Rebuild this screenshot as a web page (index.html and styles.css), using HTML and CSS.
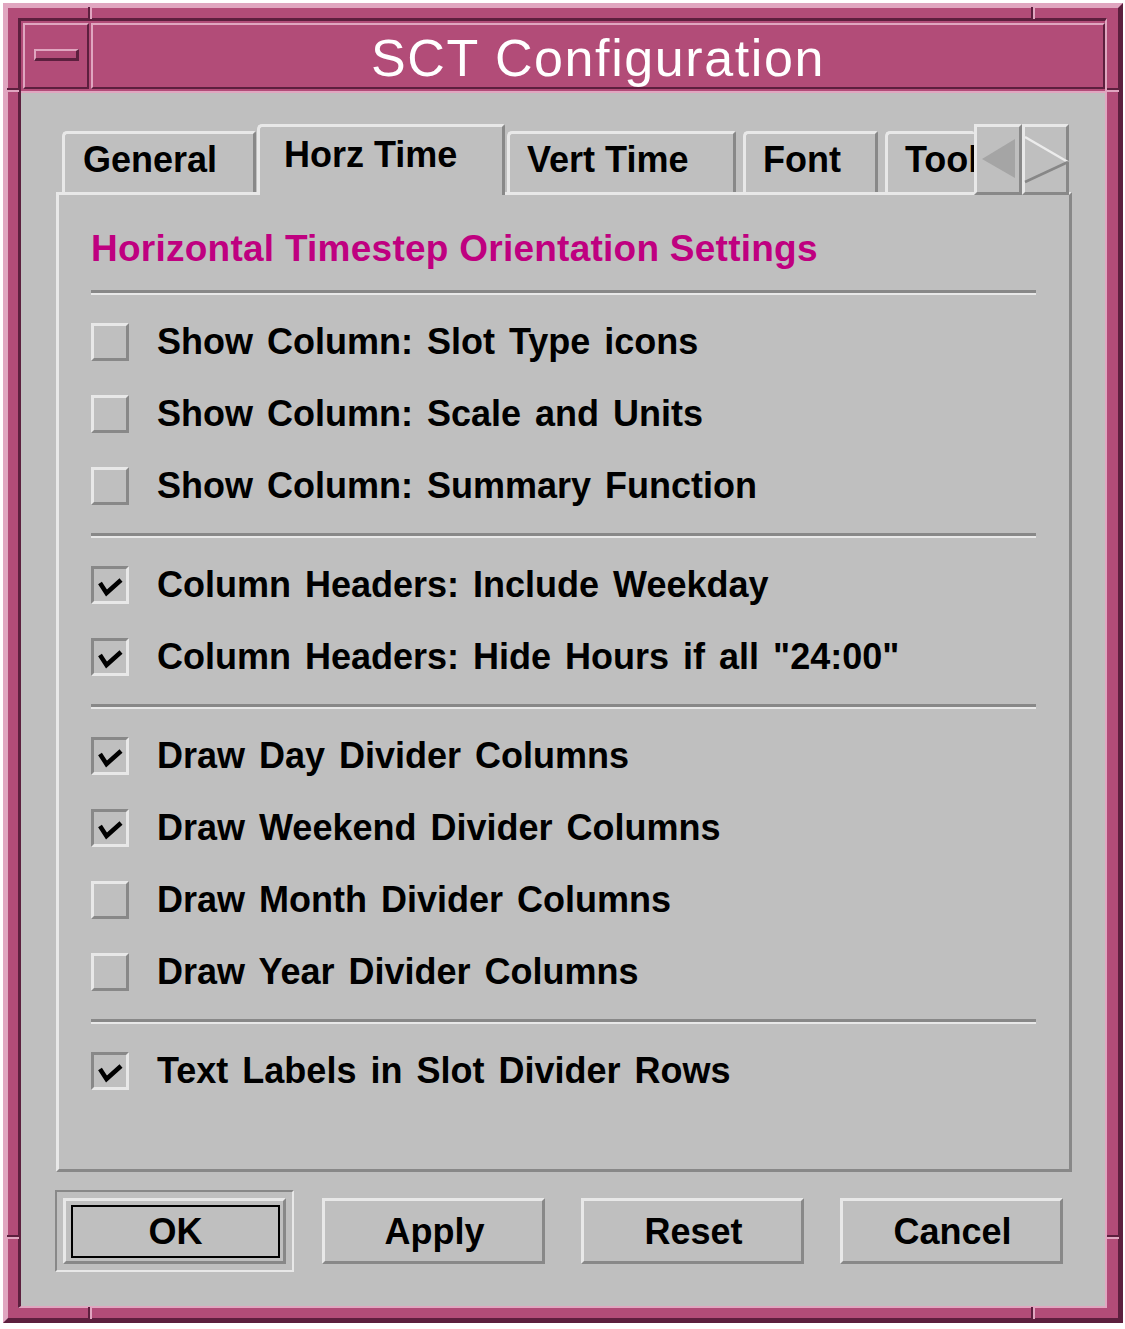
FILE: index.html
```html
<!DOCTYPE html>
<html lang="en">
<head>
    <meta charset="UTF-8">
    <title>SCT Configuration</title>
    <link rel="stylesheet" href="styles.css">
</head>
<body>
    <div class="window">
        <!-- resize handle separators on the frame -->
        <span class="tick tick-v tick-top-l"></span>
        <span class="tick tick-v tick-top-r"></span>
        <span class="tick tick-v tick-bottom-l"></span>
        <span class="tick tick-v tick-bottom-r"></span>
        <span class="tick tick-h tick-left-t"></span>
        <span class="tick tick-h tick-left-b"></span>
        <span class="tick tick-h tick-right-t"></span>
        <span class="tick tick-h tick-right-b"></span>

        <div class="frame-inner">
            <div class="titlebar">
                <div class="menu-btn"><span class="menu-bar"></span></div>
                <div class="caption">SCT Configuration</div>
            </div>

            <div class="client">
                <div class="tabs">
                    <div class="tab tab-general">General</div>
                    <div class="tab tab-active">Horz Time</div>
                    <div class="tab tab-vert">Vert Time</div>
                    <div class="tab tab-font">Font</div>
                    <div class="tab tab-tools">Tools</div>
                    <div class="tab-arrow arrow-left">
                        <svg width="42" height="65" viewBox="0 0 42 65">
                            <polygon points="5,32 38,12 38,51" fill="#a5a5a5"/>
                        </svg>
                    </div>
                    <div class="tab-arrow arrow-right">
                        <svg width="41" height="65" viewBox="0 0 41 65">
                            <line x1="0" y1="10" x2="43" y2="35" stroke="#ececec" stroke-width="2.5"/>
                            <line x1="43" y1="35" x2="0" y2="55" stroke="#878787" stroke-width="2.5"/>
                        </svg>
                    </div>
                </div>

                <div class="panel">
                    <h2 class="panel-title">Horizontal Timestep Orientation Settings</h2>
                    <div class="sep"></div>

                    <div class="option"><span class="check"></span>Show Column: Slot Type icons</div>
                    <div class="option"><span class="check"></span>Show Column: Scale and Units</div>
                    <div class="option"><span class="check"></span>Show Column: Summary Function</div>
                    <div class="sep"></div>

                    <div class="option"><span class="check checked"><svg width="32" height="32" viewBox="0 0 32 32"><polyline points="6,14 12.5,24 27,11" fill="none" stroke="#000" stroke-width="4.5"/></svg></span>Column Headers: Include Weekday</div>
                    <div class="option"><span class="check checked"><svg width="32" height="32" viewBox="0 0 32 32"><polyline points="6,14 12.5,24 27,11" fill="none" stroke="#000" stroke-width="4.5"/></svg></span>Column Headers: Hide Hours if all "24:00"</div>
                    <div class="sep"></div>

                    <div class="option"><span class="check checked"><svg width="32" height="32" viewBox="0 0 32 32"><polyline points="6,14 12.5,24 27,11" fill="none" stroke="#000" stroke-width="4.5"/></svg></span>Draw Day Divider Columns</div>
                    <div class="option"><span class="check checked"><svg width="32" height="32" viewBox="0 0 32 32"><polyline points="6,14 12.5,24 27,11" fill="none" stroke="#000" stroke-width="4.5"/></svg></span>Draw Weekend Divider Columns</div>
                    <div class="option"><span class="check"></span>Draw Month Divider Columns</div>
                    <div class="option"><span class="check"></span>Draw Year Divider Columns</div>
                    <div class="sep"></div>

                    <div class="option"><span class="check checked"><svg width="32" height="32" viewBox="0 0 32 32"><polyline points="6,14 12.5,24 27,11" fill="none" stroke="#000" stroke-width="4.5"/></svg></span>Text Labels in Slot Divider Rows</div>
                </div>

                <div class="buttons">
                    <div class="default-ring">
                        <div class="btn"><span class="btn-label focused">OK</span></div>
                    </div>
                    <div class="btn"><span class="btn-label">Apply</span></div>
                    <div class="btn"><span class="btn-label">Reset</span></div>
                    <div class="btn"><span class="btn-label">Cancel</span></div>
                </div>
            </div>
        </div>
    </div>
</body>
</html>
```

FILE: styles.css
```css
* {
    box-sizing: border-box;
}

body {
    margin: 0;
    padding: 3px;
    background: #fff;
    font-family: "Liberation Sans", Arial, sans-serif;
}

/* Ventana estilo Motif */
.window {
    position: relative;
    width: 1120px;
    height: 1320px;
    background: #b24c78;
    border: 5px solid;
    border-color: #e0a6c0 #5c1f3e #5c1f3e #e0a6c0;
    padding: 10px 11px 10px 10px;
}

.frame-inner {
    height: 100%;
    display: flex;
    flex-direction: column;
    border-style: solid;
    border-width: 3px 2px 2px 3px;
    border-color: #5c1f3e #e0a6c0 #e0a6c0 #5c1f3e;
}

.tick {
    position: absolute;
    border-style: solid;
    border-width: 0;
}

.tick-v {
    width: 4px;
    height: 12px;
    border-left: 2px solid #5c1f3e;
    border-right: 2px solid #e0a6c0;
}

.tick-h {
    width: 12px;
    height: 4px;
    border-top: 2px solid #5c1f3e;
    border-bottom: 2px solid #e0a6c0;
}

.tick-top-l { left: 80px; top: -1px; }
.tick-top-r { left: 1023px; top: -1px; }
.tick-bottom-l { left: 80px; top: 1299px; }
.tick-bottom-r { left: 1023px; top: 1299px; }
.tick-left-t { left: -1px; top: 80px; }
.tick-left-b { left: -1px; top: 1227px; }
.tick-right-t { left: 1099px; top: 80px; }
.tick-right-b { left: 1099px; top: 1227px; }

.titlebar {
    height: 70px;
    display: flex;
    padding: 2px 0 2px 2px;
}

.menu-btn {
    width: 66px;
    height: 66px;
    margin-right: 2px;
    border-style: solid;
    border-width: 2px;
    border-color: #e0a6c0 #5c1f3e #5c1f3e #e0a6c0;
    display: flex;
    align-items: center;
    justify-content: center;
}

.menu-bar {
    width: 45px;
    height: 12px;
    margin-bottom: 2px;
    border-style: solid;
    border-width: 2px 3px 3px 2px;
    border-color: #e0a6c0 #5c1f3e #5c1f3e #e0a6c0;
}

.caption {
    flex: 1;
    height: 66px;
    border-style: solid;
    border-width: 2px;
    border-color: #e0a6c0 #5c1f3e #5c1f3e #e0a6c0;
    padding-top: 6px;
    text-align: center;
    color: #fff;
    font-size: 52px;
    line-height: 54px;
    letter-spacing: 1.6px;
}

/* Área gris */
.client {
    flex: 1;
    background: #bfbfbf;
    border-top: 2px solid #e0a6c0;
    padding: 31px 33px 42px 35px;
}

.tabs {
    display: flex;
    align-items: flex-end;
    margin-left: 6px;
    height: 68px;
}

.tab {
    height: 61px;
    border-style: solid;
    border-width: 3px 3px 0 3px;
    border-color: #e8e8e8 #888 #888 #e8e8e8;
    border-top-left-radius: 5px;
    border-top-right-radius: 2px;
    padding: 6px 0 0 18px;
    font-size: 36px;
    font-weight: bold;
    line-height: 40px;
    white-space: nowrap;
    color: #000;
}

.tab-general { width: 194px; }

.tab-active {
    position: relative;
    z-index: 1;
    width: 248px;
    height: 71px;
    margin-left: 1px;
    margin-bottom: -3px;
    padding-top: 8px;
    padding-left: 24px;
    background: #bfbfbf;
}

.tab-vert { width: 229px; margin-left: 2px; padding-left: 17px; }
.tab-font { width: 135px; margin-left: 7px; padding-left: 17px; }

.tab-tools {
    width: 89px;
    margin-left: 7px;
    padding-left: 17px;
    border-right-width: 0;
    overflow: hidden;
}

.tab-arrow {
    position: relative;
    z-index: 1;
    height: 71px;
    margin-bottom: -3px;
    background: #bfbfbf;
    border-style: solid;
    border-width: 3px;
    border-color: #e8e8e8 #888 #888 #e8e8e8;
}

.tab-arrow svg {
    display: block;
    overflow: visible;
}

.arrow-left { width: 48px; }
.arrow-right { width: 47px; }

.panel {
    height: 980px;
    border-style: solid;
    border-width: 3px;
    border-color: #e8e8e8 #888 #888 #e8e8e8;
    padding: 32px 33px 0 32px;
}

.panel-title {
    margin: 0 0 19px;
    color: #bf0080;
    font-size: 37px;
    font-weight: bold;
    line-height: 44px;
    letter-spacing: 0.25px;
}

.sep {
    height: 5px;
    margin: 11px 0;
    border-top: 3px solid #888;
    border-bottom: 2px solid #e8e8e8;
}

.option {
    height: 72px;
    display: flex;
    align-items: center;
    font-size: 36px;
    font-weight: bold;
    line-height: 72px;
    color: #000;
    white-space: nowrap;
    word-spacing: 4px;
}

.check {
    width: 38px;
    height: 38px;
    flex: none;
    margin-right: 28px;
    border-style: solid;
    border-width: 3px;
    border-color: #e8e8e8 #888 #888 #e8e8e8;
}

.check.checked {
    border-color: #888 #e8e8e8 #e8e8e8 #888;
}

.check svg {
    display: block;
}

/* Botones */
.buttons {
    display: flex;
    align-items: flex-start;
    gap: 36px;
    margin: 26px 0 0 7px;
}

.default-ring {
    margin: -8px;
    padding: 6px;
    border-style: solid;
    border-width: 2px;
    border-color: #888 #e8e8e8 #e8e8e8 #888;
}

.btn {
    width: 223px;
    height: 66px;
    padding: 4px 3px 3px 5px;
    border-style: solid;
    border-width: 3px;
    border-color: #e8e8e8 #888 #888 #e8e8e8;
}

.btn-label {
    display: flex;
    height: 100%;
    align-items: center;
    justify-content: center;
    border: 2px solid transparent;
    font-size: 36px;
    font-weight: bold;
    color: #000;
}

.btn-label.focused {
    border-color: #000;
}
```
